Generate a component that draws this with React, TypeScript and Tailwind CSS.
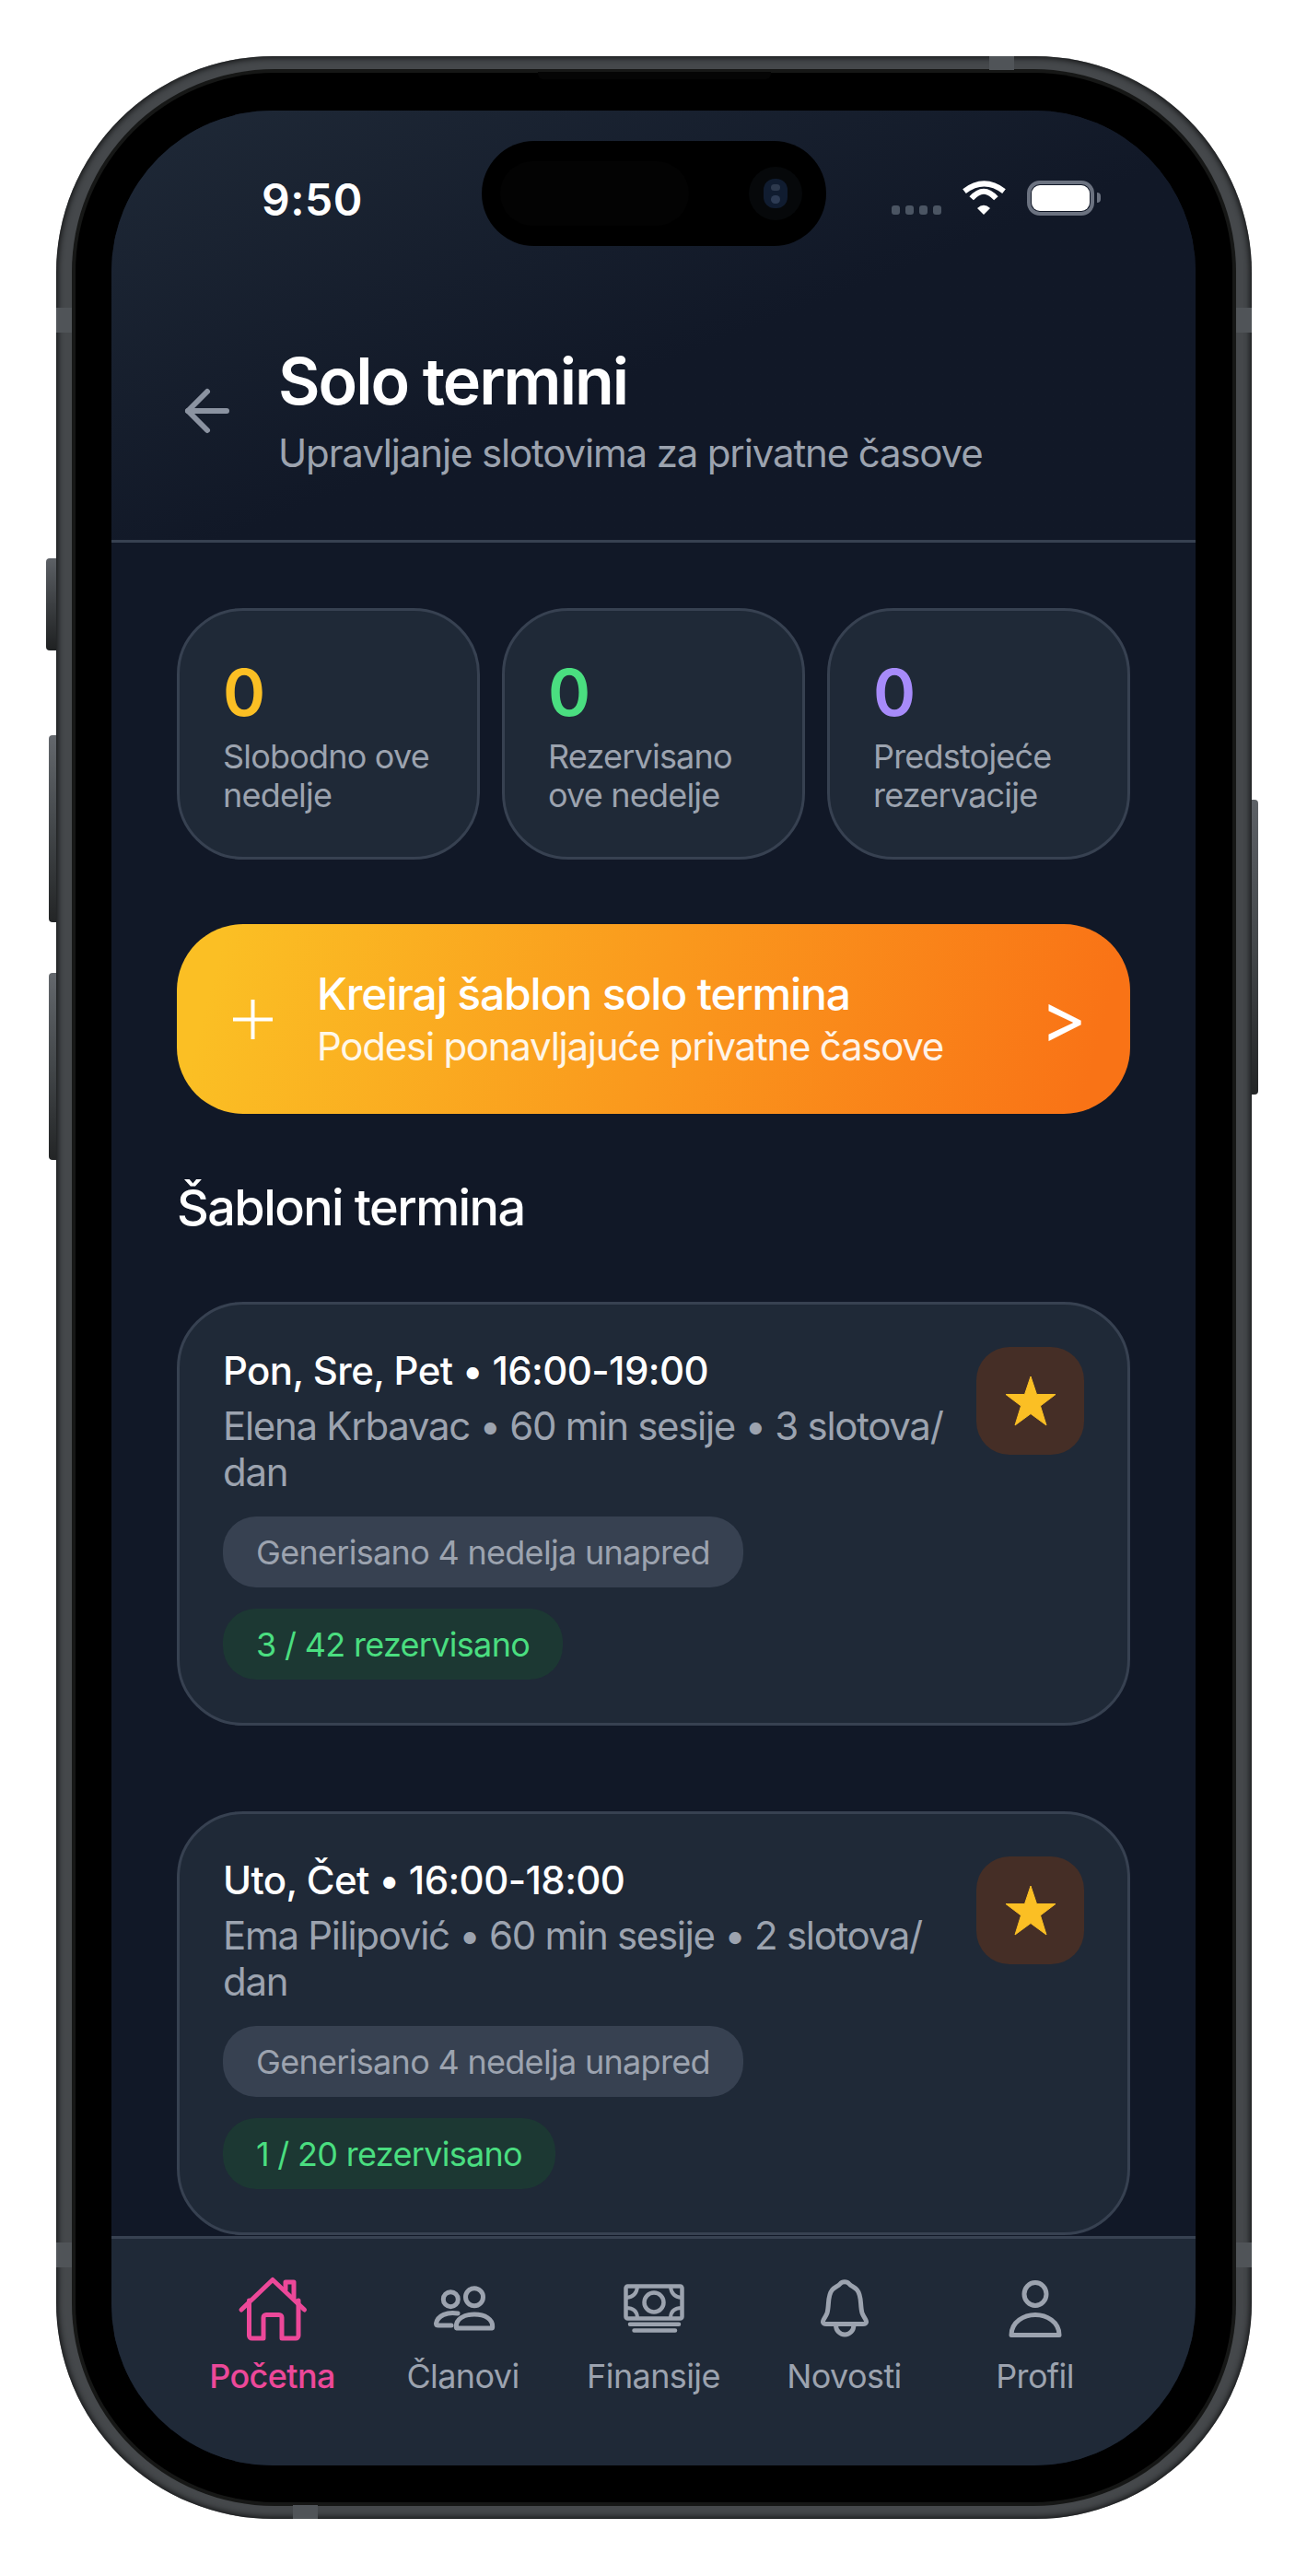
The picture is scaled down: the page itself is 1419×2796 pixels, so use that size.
import React from "react";
import { ArrowLeft } from "lucide-react";

function Stat({ value, color, label }: { value: string; color: string; label: React.ReactNode }) {
  return (
    <div className="flex-1 min-w-0 h-[273px] rounded-[72px] border-[3px] border-[#374151] bg-[#1f2937] px-[47px] pt-[47px]">
      <div className={`text-[70px] leading-[84px] font-semibold ${color}`}>{value}</div>
      <div className="mt-[6px] text-[36px] leading-[42px] tracking-[-0.8px] text-[#9ca3af]">{label}</div>
    </div>
  );
}

function TemplateCard({ title, sub, booked }: { title: string; sub: React.ReactNode; booked: string }) {
  return (
    <div className="h-[460px] shrink-0 rounded-[72px] border-[3px] border-[#374151] bg-[#1f2937] pl-[47px] pr-[47px] pt-[46px] flex items-start gap-[20px]">
      <div className="flex-1 min-w-0 pt-[2px]">
        <div className="text-[42px] leading-[48px] font-medium tracking-[-0.6px] text-white">{title}</div>
        <div className="mt-[11px] text-[42px] leading-[50px] tracking-[-1.3px] text-[#9ca3af]">{sub}</div>
        <div className="mt-[23px] flex flex-col items-start gap-[23px]">
          <div className="h-[77px] rounded-[36px] bg-[#374151] px-[36px] flex items-center text-[36px] tracking-[-0.7px] text-[#9ca3af]">Generisano 4 nedelja unapred</div>
          <div className="h-[77px] rounded-[36px] bg-[#1c3833] px-[36px] flex items-center text-[36px] tracking-[-0.7px] text-[#4ade80]">{booked}</div>
        </div>
      </div>
      <div className="w-[117px] h-[117px] shrink-0 rounded-[36px] bg-[#452e26] flex items-center justify-center">
        <svg width="56" height="54" viewBox="0 0 56 54"><polygon fill="#fbbf24" points="28,0 34.5,19.5 55,19.5 38.5,32 45,53 28,40.5 11,53 17.5,32 1,19.5 21.5,19.5" stroke="#fbbf24" strokeWidth="1" strokeLinejoin="round" /></svg>
      </div>
    </div>
  );
}

function TabIcon({ x, color, children }: { x: number; color: string; children: React.ReactNode }) {
  return (
    <svg width="96" height="85" viewBox={`${x} 0 96 85`} fill="none" stroke={color} strokeWidth="5" strokeLinecap="round" strokeLinejoin="round">
      {children}
    </svg>
  );
}

function Tab({ label, active, icon }: { label: string; active?: boolean; icon: React.ReactNode }) {
  return (
    <div className="flex-1 flex flex-col items-center">
      {icon}
      <div className={`mt-[5px] text-[36px] leading-[48px] tracking-[-0.6px] whitespace-nowrap ${active ? "text-[#ec4899] font-medium" : "text-[#9ca3af]"}`}>{label}</div>
    </div>
  );
}

export default function App() {
  const gray = "#9ca3af";
  return (
    <div className="relative w-[1419px] h-[2796px] bg-white pl-[61px] pt-[61px] font-['Inter',sans-serif] overflow-hidden">
      {/* side buttons */}
      <div className="absolute left-[50px] top-[606px] w-[12px] h-[100px] rounded-l-[4px] bg-linear-to-b from-[#5d6166] via-[#3c3f42] to-[#1f2122]" />
      <div className="absolute left-[53px] top-[798px] w-[9px] h-[203px] rounded-l-[4px] bg-linear-to-b from-[#64686d] via-[#43474a] to-[#232526]" />
      <div className="absolute left-[53px] top-[1056px] w-[9px] h-[203px] rounded-l-[4px] bg-linear-to-b from-[#64686d] via-[#43474a] to-[#232526]" />
      <div className="absolute left-[1357px] top-[868px] w-[9px] h-[320px] rounded-r-[4px] bg-linear-to-b from-[#5d6166] via-[#43474a] to-[#232526]" />

      {/* device */}
      <div className="relative w-[1298px] h-[2673px] rounded-[235px] bg-[#45484b] px-[17px] py-[14px] shadow-[inset_0_0_6px_2px_#151617]">
        <div className="w-full h-full rounded-[220px] bg-[#161716] p-[4px]">
          <div className="w-full h-full rounded-[216px] bg-black pl-[39px] pr-[40px] pt-[41px] pb-[40px]">
            {/* screen */}
            <div className="relative w-full h-full rounded-[175px] overflow-hidden bg-[#111827] flex flex-col">
              <header className="shrink-0 h-[469px] border-b-[3px] border-[#374151] bg-linear-to-br from-[#1f2937] to-[#111827] to-55%">
                <div className="flex justify-between pl-[163px] pr-[103px] pt-[68px] h-[185px]">
                  <div className="text-[48px] leading-[58px] font-semibold text-white tracking-[0.5px]">9:50</div>
                  <div className="flex items-start pt-[8px]">
                    <div className="flex gap-[6px] mt-[27px] mr-[22px]">
                      <div className="w-[9px] h-[10px] rounded-[3px] bg-[#4b5563]" />
                      <div className="w-[9px] h-[10px] rounded-[3px] bg-[#4b5563]" />
                      <div className="w-[9px] h-[10px] rounded-[3px] bg-[#4b5563]" />
                      <div className="w-[9px] h-[10px] rounded-[3px] bg-[#4b5563]" />
                    </div>
                    <svg width="50" height="37" viewBox="0 0 50 37" fill="none" className="mr-[21px]">
                      <path d="M3 11.6 Q24.5 -4.7 46 11.6" stroke="#fff" strokeWidth="6" />
                      <path d="M10.7 19.3 Q24 4 37.4 19.3" stroke="#fff" strokeWidth="6" />
                      <path d="M17 30 Q24 23.5 31 30 L24 37 Z" fill="#fff" />
                    </svg>
                    <div className="w-[73px] h-[38px] rounded-[14px] border-[4px] border-[#6b7280] p-[1px]">
                      <div className="w-full h-full rounded-[9px] bg-white" />
                    </div>
                    <div className="ml-[3px] mt-[13px] w-[4px] h-[11px] rounded-r-[4px] bg-[#6b7280]" />
                  </div>
                </div>
                <div className="flex items-center pl-[68px] h-[278px]">
                  <ArrowLeft size={72} strokeWidth={2} color="#8b93a1" className="shrink-0 mt-[3px]" />
                  <div className="ml-[41px]">
                    <div className="text-[70px] leading-[84px] font-semibold tracking-[-2px] text-white">Solo termini</div>
                    <div className="mt-[11px] text-[42px] leading-[50px] tracking-[-1.15px] text-[#9ca3af]">Upravljanje slotovima za privatne časove</div>
                  </div>
                </div>
              </header>

              <main className="flex-1 min-h-0 overflow-hidden px-[71px] pt-[71px] flex flex-col">
                <div className="flex gap-[24px] shrink-0">
                  <Stat value="0" color="text-[#fbbf24]" label={<>Slobodno ove<br />nedelje</>} />
                  <Stat value="0" color="text-[#4ade80]" label={<>Rezervisano<br />ove nedelje</>} />
                  <Stat value="0" color="text-[#a78bfa]" label={<>Predstojeće<br />rezervacije</>} />
                </div>

                <div className="mt-[70px] h-[206px] shrink-0 rounded-[72px] bg-linear-[105deg] from-[#fbbf24] from-5% to-[#f97316] to-95% flex items-center pl-[61px] pr-[47px]">
                  <svg width="43" height="43" viewBox="0 0 43 43" className="shrink-0" stroke="#fff" strokeWidth="4"><path d="M0 21.5H43M21.5 0V43" /></svg>
                  <div className="ml-[48px] flex-1 min-w-0">
                    <div className="text-[48px] leading-[56px] font-medium tracking-[-1.15px] text-white -mt-[1px]">Kreiraj šablon solo termina</div>
                    <div className="mt-[4px] text-[42px] leading-[50px] tracking-[-1.25px] text-white/90">Podesi ponavljajuće privatne časove</div>
                  </div>
                  <div className="text-[76px] leading-[72px] font-normal text-white -mt-[4px]">&gt;</div>
                </div>

                <div className="mt-[66px] h-[72px] shrink-0 text-[54px] leading-[72px] font-medium tracking-[-1.6px] text-white">Šabloni termina</div>

                <div className="mt-[66px] flex flex-col gap-[93px]">
                  <TemplateCard title="Pon, Sre, Pet • 16:00-19:00" sub={<>Elena Krbavac • 60 min sesije • 3 slotova/<wbr />dan</>} booked="3 / 42 rezervisano" />
                  <TemplateCard title="Uto, Čet • 16:00-18:00" sub={<>Ema Pilipović • 60 min sesije • 2 slotova/<wbr />dan</>} booked="1 / 20 rezervisano" />
                </div>
              </main>

              <nav className="shrink-0 h-[249px] border-t-[3px] border-[#374151] bg-[#1f2937] px-[71px] pt-[35px] flex">
                <Tab label="Početna" active icon={
                  <TabIcon x={-3} color="#ec4899">
                    <path d="M11 42 45 9.5 79.5 42" />
                    <path d="M19.5 32V70a3 3 0 0 0 3 3H35V50.5a3 3 0 0 1 3-3H52a3 3 0 0 1 3 3V73H70a3 3 0 0 0 3-3V32" />
                    <path d="M59 20V12H68V29" />
                  </TabIcon>
                } />
                <Tab label="Članovi" icon={
                  <TabIcon x={204} color={gray}>
                    <circle cx="238.3" cy="30.7" r="8" />
                    <circle cx="264" cy="28.3" r="9.5" />
                    <path d="M244.5 62C243 52 253 47 264 47S285 52 283.5 62Z" />
                    <path d="M246 46C235 44 224 48 222.5 57Q222.5 59 225 59H239" />
                  </TabIcon>
                } />
                <Tab label="Finansije" icon={
                  <TabIcon x={2} color={gray}>
                    <rect x="19.5" y="16.5" width="61" height="35" rx="2" strokeWidth="4.5" />
                    <circle cx="50" cy="34" r="10.5" strokeWidth="4.5" />
                    <path d="M20 29Q31 28 32 17M68 17Q69 28 80 29M20 40Q31 40 32 50M68 50Q69 40 80 40" strokeWidth="4" />
                    <path d="M24 57.7H77M28.5 64.5H73" strokeWidth="4.5" />
                  </TabIcon>
                } />
                <Tab label="Novosti" icon={
                  <TabIcon x={209} color={gray}>
                    <path d="M233.5 55.5C232.5 54 236.5 50 238 45.5C240.5 37 238 27 243.5 20.5C246 17.5 250 16.5 252 14C254.5 11 259.5 11 262 14C264 16.5 268 17.5 270.5 20.5C276 27 273.5 37 276 45.5C277.5 50 281.5 54 280.5 55.5C280 57.5 279 57.5 277 57.5H237C235 57.5 234 57.5 233.5 55.5Z" />
                    <path d="M247.5 59a9.7 10 0 0 0 19.4 0" />
                  </TabIcon>
                } />
                <Tab label="Profil" icon={
                  <TabIcon x={-48} color={gray}>
                    <ellipse cx="0" cy="25" rx="12" ry="12.5" />
                    <path d="M-26 69.5C-26 55-12 47.5 0 47.5S26 55 26 69.5Z" />
                  </TabIcon>
                } />
              </nav>

              {/* dynamic island */}
              <div className="absolute left-[402px] top-[33px] w-[374px] h-[114px] rounded-[57px] bg-black flex items-center">
                <div className="ml-[20px] w-[205px] h-[70px] rounded-[35px] bg-[#030303]" />
                <div className="absolute left-[290px] top-[28px] w-[58px] h-[58px] rounded-full bg-[#06080a] flex items-center justify-center">
                  <div className="w-[26px] h-[32px] rounded-[12px] bg-[#101c30] flex flex-col items-center justify-around py-[3px]">
                    <div className="w-[10px] h-[7px] rounded-full bg-[#2d394d]" />
                    <div className="w-[10px] h-[9px] rounded-full bg-[#2d3b54]" />
                  </div>
                </div>
              </div>
            </div>
          </div>
        </div>
        {/* antenna bands and speaker */}
        <div className="absolute left-0 top-[273px] w-[17px] h-[27px] bg-[#505458]" />
        <div className="absolute right-0 top-[273px] w-[17px] h-[27px] bg-[#505458]" />
        <div className="absolute left-0 top-[2373px] w-[17px] h-[27px] bg-[#505458]" />
        <div className="absolute right-0 top-[2373px] w-[17px] h-[27px] bg-[#505458]" />
        <div className="absolute left-[257px] bottom-0 w-[27px] h-[15px] bg-[#505458]" />
        <div className="absolute left-[1013px] top-0 w-[27px] h-[15px] bg-[#505458]" />
        <div className="absolute left-[523px] top-[17px] w-[253px] h-[8px] rounded-b-[6px] bg-[#050505]" />
      </div>
    </div>
  );
}
